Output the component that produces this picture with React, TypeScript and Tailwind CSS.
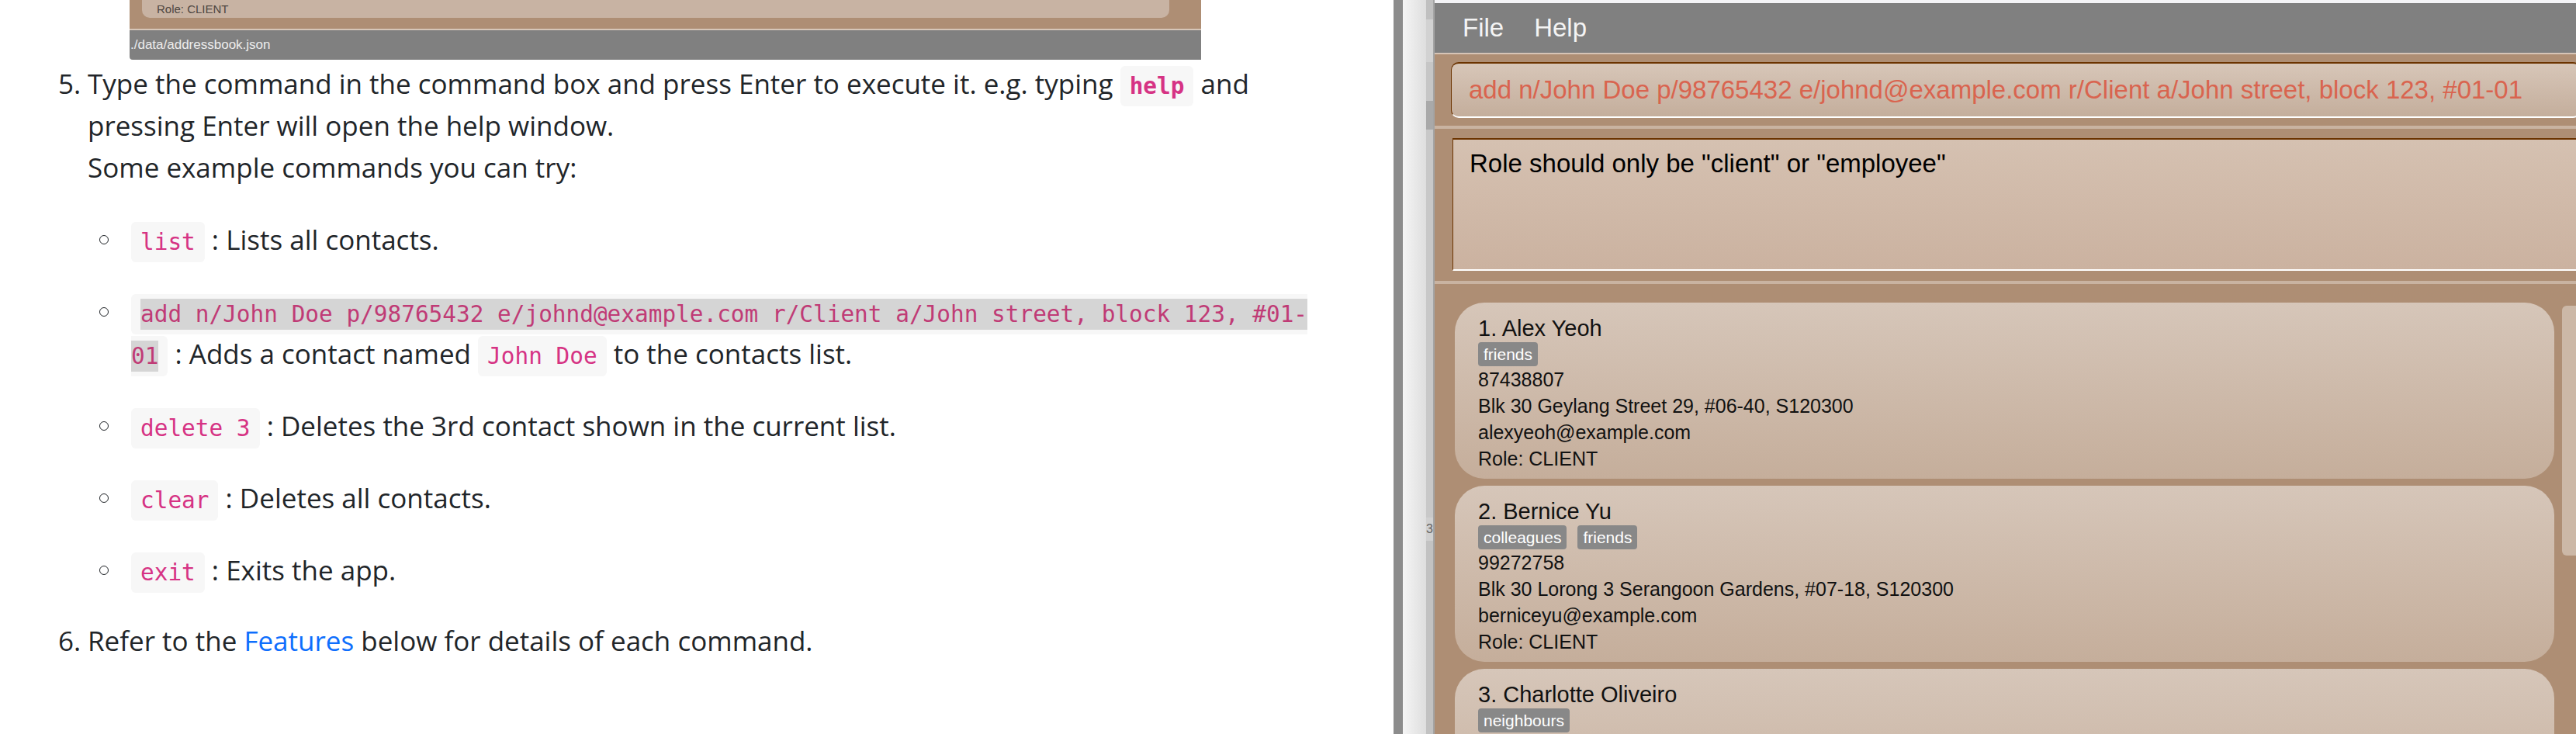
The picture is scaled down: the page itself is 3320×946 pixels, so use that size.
import React from 'react'

const codeCls =
  "font-['DejaVu_Sans_Mono',monospace] text-[29.4px] leading-[20px] text-[#d63384] bg-[#f7f7f7] rounded-[6px] px-[12px] py-[9px]"

function Bullet() {
  return (
    <div className="w-[56px] h-[54px] shrink-0 flex items-center">
      <span className="ml-[15px] w-[12px] h-[12px] rounded-full border-[1.5px] border-[#212529]" />
    </div>
  )
}

function Tag({ label }: { label: string }) {
  return (
    <span className="h-[31px] leading-[31px] px-[7px] rounded-[4px] bg-[#888888] text-white text-[21px]">
      {label}
    </span>
  )
}

type Person = {
  name: string
  tags: string[]
  phone: string
  address: string
  email: string
}

const people: Person[] = [
  {
    name: '1. Alex Yeoh',
    tags: ['friends'],
    phone: '87438807',
    address: 'Blk 30 Geylang Street 29, #06-40, S120300',
    email: 'alexyeoh@example.com',
  },
  {
    name: '2. Bernice Yu',
    tags: ['colleagues', 'friends'],
    phone: '99272758',
    address: 'Blk 30 Lorong 3 Serangoon Gardens, #07-18, S120300',
    email: 'berniceyu@example.com',
  },
  {
    name: '3. Charlotte Oliveiro',
    tags: ['neighbours'],
    phone: '93210283',
    address: 'Blk 11 Ang Mo Kio Street 74, #11-04, S560011',
    email: 'charlotte@example.com',
  },
]

function PersonCard({ p }: { p: Person }) {
  return (
    <div className="shrink-0 rounded-[38px] bg-gradient-to-b from-[#d6c6b9] to-[#c5ae9b] pl-[30px] pt-[15px] pb-[9px] text-[#111]">
      <div className="text-[29px] leading-[36px]">{p.name}</div>
      <div className="flex gap-[14px] h-[31px]">
        {p.tags.map((t) => (
          <Tag key={t} label={t} />
        ))}
      </div>
      <div className="text-[25px] leading-[34px]">
        <div>{p.phone}</div>
        <div>{p.address}</div>
        <div>{p.email}</div>
        <div>Role: CLIENT</div>
      </div>
    </div>
  )
}

function DocPanel() {
  return (
    <div className="w-[1796px] shrink-0 bg-white overflow-hidden">
      {/* cropped screenshot of the app */}
      <div className="ml-[167px] w-[1381px] h-[77px] flex flex-col overflow-hidden rounded-bl-[4px] font-['Liberation_Sans',Arial,sans-serif]">
        <div className="h-[23px] bg-[#ae8e74] flex pl-[16px] pr-[41px]">
          <div className="flex-1 bg-[#c8b3a3] rounded-b-[10px] pl-[19px] text-[15px] leading-[24px] text-[#4e4640]">
            Role: CLIENT
          </div>
        </div>
        <div className="h-[14px] bg-[#ae8e74]" />
        <div className="h-[2px] bg-[#d6c6b8]" />
        <div className="flex-1 bg-[#808080] text-[#ececec] text-[17px] flex items-center pl-[1px]">
          ./data/addressbook.json
        </div>
      </div>

      <div className="font-['Open_Sans',sans-serif] text-[35px] leading-[54px] text-[#212529] mt-[4px]">
        <div className="flex">
          <span className="ml-[75px] w-[38px] shrink-0">5.</span>
          <div>
            <div className="h-[54px]">
              Type the command in the command box and press Enter to execute it. e.g. typing{' '}
              <code className={codeCls + ' font-bold'}>help</code> and
            </div>
            <div>pressing Enter will open the help window.</div>
            <div>Some example commands you can try:</div>

            <div className="flex flex-col gap-[39px] mt-[39px]">
              <div className="flex h-[54px]">
                <Bullet />
                <div>
                  <code className={codeCls}>list</code> : Lists all contacts.
                </div>
              </div>

              <div className="flex">
                <Bullet />
                <div>
                  <div className="h-[54px]">
                    <code className="font-['DejaVu_Sans_Mono',monospace] text-[29.4px] leading-[20px] text-[#c03b76] bg-[#f7f7f7] rounded-l-[6px] pl-[12px] py-[9px]">
                      <span className="bg-[#d5d5d5] py-[3px]">
                        add n/John Doe p/98765432 e/johnd@example.com r/Client a/John street, block 123, #01-
                      </span>
                    </code>
                  </div>
                  <div className="h-[54px]">
                    <code className="font-['DejaVu_Sans_Mono',monospace] text-[29.4px] leading-[20px] text-[#c03b76] bg-[#f7f7f7] rounded-r-[6px] pr-[12px] py-[9px]">
                      <span className="bg-[#d5d5d5] py-[3px]">01</span>
                    </code>{' '}
                    : Adds a contact named <code className={codeCls}>John Doe</code> to the contacts list.
                  </div>
                </div>
              </div>

              <div className="flex h-[54px]">
                <Bullet />
                <div>
                  <code className={codeCls}>delete 3</code> : Deletes the 3rd contact shown in the current list.
                </div>
              </div>

              <div className="flex h-[54px]">
                <Bullet />
                <div>
                  <code className={codeCls}>clear</code> : Deletes all contacts.
                </div>
              </div>

              <div className="flex h-[54px]">
                <Bullet />
                <div>
                  <code className={codeCls}>exit</code> : Exits the app.
                </div>
              </div>
            </div>
          </div>
        </div>

        <div className="flex mt-[37px]">
          <span className="ml-[75px] w-[38px] shrink-0">6.</span>
          <div>
            Refer to the <span className="text-[#0d6efd]">Features</span> below for details of each command.
          </div>
        </div>
      </div>
    </div>
  )
}

function Divider() {
  return (
    <div className="flex shrink-0 h-full">
      <div className="w-[12px] bg-[#8c8c8c]" />
      <div className="w-[30px] bg-gradient-to-r from-[#f5f5f5] to-[#dedede]" />
      <div className="w-[9px] flex flex-col bg-[#c4c4c4] font-['Liberation_Sans',Arial,sans-serif] text-[16px] text-[#666] overflow-hidden">
        <div className="h-[25px] bg-[#c0c0c0]" />
        <div className="h-[55px] bg-[#d2d2d2]" />
        <div className="h-[50px] bg-[#c6c6c6]" />
        <div className="h-[37px] bg-[#a9a9a9]" />
        <div className="h-[500px] bg-[#c8c8c8]" />
        <div className="h-[30px] bg-[#d0d0d0] leading-[30px]">3</div>
        <div className="flex-1 bg-[#c2c2c2]" />
      </div>
      <div className="w-[2px] bg-[#a4a4a4]" />
    </div>
  )
}

function AppWindow() {
  return (
    <div className="flex-1 h-full flex flex-col bg-[#ae8e74] font-['Liberation_Sans',Arial,sans-serif] overflow-hidden">
      <div className="h-[4px] bg-[#f3f3f6] shrink-0" />
      <div className="h-[64px] shrink-0 bg-[#808080] flex items-center gap-[39px] pl-[36px] text-[33px] text-[#f4f4f4]">
        <span>File</span>
        <span>Help</span>
      </div>
      <div className="h-[2px] shrink-0 bg-[#d6c4b6]" />

      <div className="shrink-0 pt-[10px] pb-[10px] pl-[21px] -mr-[6px]">
        <div className="h-[72px] rounded-[10px] border-t-2 border-l-[1.5px] border-[#6b3300] border-b-2 border-b-white bg-gradient-to-b from-[#d7c6b8] to-[#c4ae9c] flex items-center pl-[22px] text-[33px] text-[#d9644f]">
          add n/John Doe p/98765432 e/johnd@example.com r/Client a/John street, block 123, #01-01
        </div>
      </div>
      <div className="h-[4px] shrink-0 bg-[#c9b3a1]" />

      <div className="shrink-0 pt-[12px] pb-[13px] pl-[23px]">
        <div className="h-[171px] border-t-2 border-l border-[#6b3300] border-b-2 border-b-white bg-gradient-to-b from-[#d5c1b1] to-[#cbb2a0] pt-[12px] pl-[21px] text-[33px] leading-[38px] text-black">
          Role should only be "client" or "employee"
        </div>
      </div>
      <div className="h-[4px] shrink-0 bg-[#c9b3a1]" />

      <div className="flex-1 min-h-0 flex pt-[24px] pl-[26px] gap-[10px] overflow-hidden">
        <div className="flex-1 flex flex-col gap-[9px]">
          {people.map((p) => (
            <PersonCard key={p.name} p={p} />
          ))}
        </div>
        <div className="w-[18px] shrink-0 pt-[4px]">
          <div className="h-[322px] rounded-l-[6px] bg-[#ccb8a7]" />
        </div>
      </div>
    </div>
  )
}

export default function App() {
  return (
    <div className="w-[3320px] h-[946px] flex overflow-hidden bg-white">
      <DocPanel />
      <Divider />
      <AppWindow />
    </div>
  )
}
